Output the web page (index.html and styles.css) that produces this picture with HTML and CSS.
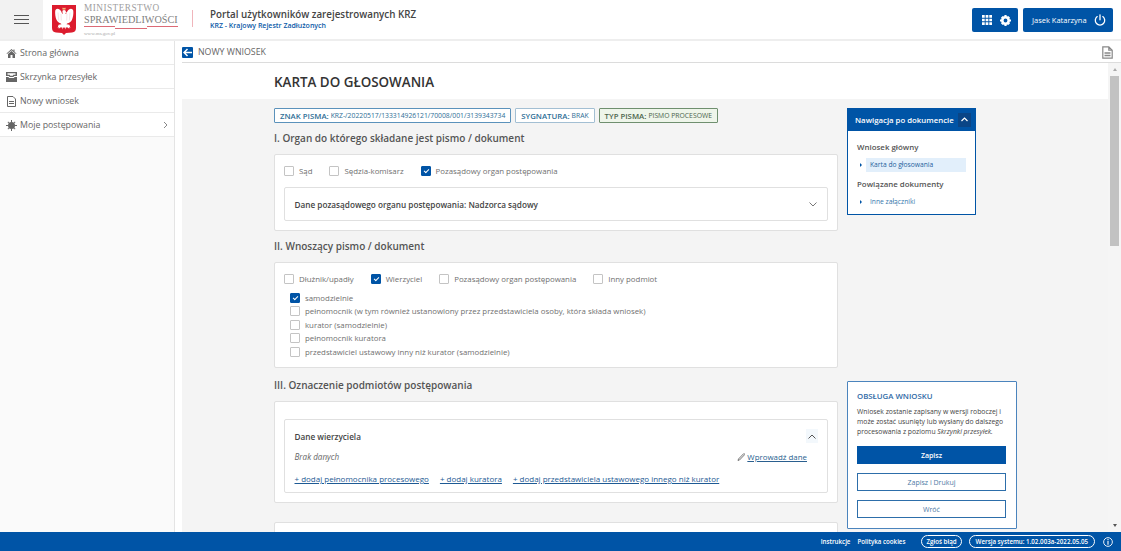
FILE: index.html
```html
<!DOCTYPE html>
<html lang="pl">
<head>
<meta charset="utf-8">
<title>Karta do głosowania</title>
<link rel="stylesheet" href="styles.css">
</head>
<body>
<header class="top">
  <button class="burger" aria-label="menu"><span></span><span></span><span></span></button>
  <div class="logo">
    <svg class="eagle" width="26" height="30" viewBox="0 0 26 30">
      <path d="M1 0H25V23Q25 27 21 27.500L15 28 13 30 11 28 5 27.500Q1 27 1 23Z" fill="#dc1c2e"/>
      <path d="M11.500 2.500 12.500 3.500 13 2.200 13.500 3.500 14.500 2.500 14.500 4.500H11.500Z" fill="#f3d98a"/>
      <path d="M13 5c1.200 0 2 .7 1.800 1.800l1.200.8-1.400.2L14.500 9c1-.2 1.300-1.600 2-3 .8-1.300 2-2.200 3.500-2.300 1 .1 2 .8 2.300 2 .3 3-.2 6.500-1.400 9.300-.9 1.900-2.600 3.100-4.800 3.400l-.6.8 2.900.5 1 3-1.500-.4.500 1.400-2.300-1.400-1.600.4.500 1.800-2-2.500-2 2.500.5-1.800-1.600-.4-2.300 1.400.5-1.400-1.500.4 1-3 2.900-.5-.6-.8C8.200 18.200 6.500 17 5.600 15.100 4.400 12.200 3.900 8.800 4.200 5.700c.3-1.200 1.300-1.900 2.300-2 1.500.1 2.700 1 3.500 2.300.7 1.400 1 2.800 1.700 3l-.3-3C11.300 5.800 12 5 13 5Z" fill="#fff"/>
      <path d="M7 7.500l.7 8M10 9l.3 6.500M19 7.500l-.7 8M16 9l-.3 6.500" stroke="#e8c9cc" stroke-width=".5"/>
    </svg>
    <div class="ministry">
      <div class="m1">MINISTERSTWO</div>
      <div class="m2">SPRAWIEDLIWOŚCI</div>
      <div class="mline"><i></i><i></i><i></i></div>
      <div class="m3">www.ms.gov.pl</div>
    </div>
  </div>
  <div class="sep"></div>
  <div class="portal">
    <div class="p1">Portal użytkowników zarejestrowanych KRZ</div>
    <div class="p2">KRZ - Krajowy Rejestr Zadłużonych</div>
  </div>
  <div class="top-actions">
    <div class="tbtn tools">
      <svg width="10" height="10" viewBox="0 0 11 11" fill="#fff"><path d="M0 0h3v3H0zM4 0h3v3H4zM8 0h3v3H8zM0 4h3v3H0zM4 4h3v3H4zM8 4h3v3H8zM0 8h3v3H0zM4 8h3v3H4zM8 8h3v3H8z"/></svg>
      <svg width="11" height="11" viewBox="0 0 12 12"><circle cx="6" cy="6" r="3.500" fill="none" stroke="#fff" stroke-width="2.800"/><path d="M4.800 0h2.400v2H4.800zM4.800 10h2.400v2H4.800zM0 4.800h2v2.400H0zM10 4.800h2v2.400h-2zM1 3 3 1l1.200 1.200L2.200 4.200zM9 1l2 2-1.200 1.200-2-2zM1 9l2 2 1.200-1.200-2-2zM11 9l-2 2-1.200-1.200 2-2z" fill="#fff"/></svg>
    </div>
    <div class="tbtn user">
      <span>Jasek Katarzyna</span>
      <svg width="12" height="12" viewBox="0 0 12 12" fill="none" stroke="#fff" stroke-width="1.300" stroke-linecap="round"><path d="M6 .8v5M3.200 2.600a4.700 4.700 0 1 0 5.600 0"/></svg>
    </div>
  </div>
</header>

<div class="middle">
  <nav class="side">
    <a class="side-item">
      <svg width="10" height="9" viewBox="0 0 10 9" fill="#666"><path d="M5 0 0 4.500l.5.500L5 1.200 9.500 5l.5-.5L8 2.700V.5H7v1.300ZM1.500 5v4h2.500V6h2v3h2.500V5L5 2Z"/></svg>
      Strona główna
    </a>
    <a class="side-item">
      <svg width="11" height="10" viewBox="0 0 11 10" fill="#666"><path d="M0 0h11v4H8L7.500 5h-4L3 4H0Zm1.500 1.200v1.600h2.200l.5 1h2.600l.5-1h2.200V1.200ZM0 5h2.500l.5 1h5l.5-1H11v5H0Z"/></svg>
      Skrzynka przesyłek
    </a>
    <a class="side-item">
      <svg width="9" height="11" viewBox="0 0 9 11" fill="none" stroke="#666"><path d="M.5.500h5.500l2.500 2.500v7.500h-8ZM2 5.500h5M2 7.500h5"/></svg>
      Nowy wniosek
    </a>
    <a class="side-item">
      <svg width="11" height="11" viewBox="0 0 11 11" fill="#666"><circle cx="5.500" cy="5.500" r="3.500"/><path d="M5 0h1v2H5zM5 9h1v2H5zM0 5h2v1H0zM9 5h2v1H9zM1.500 2.200l.7-.7L3.500 3l-.5.500zM8.800 1.500l.7.7L8 3.500 7.500 3zM1.500 8.800l.7.7L3.500 8 3 7.500zM9.500 8.800l-.7.7L7.500 8l.5-.5z"/></svg>
      Moje postępowania
      <svg class="side-chev" width="5" height="8" viewBox="0 0 5 8" fill="none" stroke="#888"><path d="M1 1l3 3-3 3"/></svg>
    </a>
  </nav>

  <main class="main">
    <div class="crumb">
      <span class="back"><svg width="9" height="9" viewBox="0 0 9 9" fill="none" stroke="#fff" stroke-width="1.500"><path d="M4.500 1 1 4.500 4.500 8M1 4.500h8"/></svg></span>
      <span class="crumb-text">NOWY WNIOSEK</span>
      <svg class="crumb-doc" width="11" height="13" viewBox="0 0 11 13" fill="none" stroke="#888" stroke-width="1.200"><path d="M.8.800h6l3.400 3.400v8H.8ZM6.800.800v3.400h3.400"/><path d="M2.500 7h6M2.500 9.500h6" stroke-width="1.500"/></svg>
    </div>
    <div class="scroller">
      <div class="doc">
        <h1 class="title">KARTA DO GŁOSOWANIA</h1>
        <div class="gray">
          <div class="col">
            <div class="tags">
              <span class="tag"><b>ZNAK PISMA:</b> KRZ-/20220517/133314926121/70008/001/3139343734</span>
              <span class="tag tag-light"><b>SYGNATURA:</b> BRAK</span>
              <span class="tag tag-green"><b>TYP PISMA:</b> PISMO PROCESOWE</span>
            </div>

            <h2 class="sec first">I. Organ do którego składane jest pismo / dokument</h2>
            <section class="card c1">
              <div class="checks">
                <label class="chk"><i class="box"></i>Sąd</label>
                <label class="chk"><i class="box"></i>Sędzia-komisarz</label>
                <label class="chk"><i class="box on"></i>Pozasądowy organ postępowania</label>
              </div>
              <div class="inner inner-row">
                <b>Dane pozasądowego organu postępowania: Nadzorca sądowy</b>
                <svg width="8" height="5" viewBox="0 0 8 5" fill="none" stroke="#777"><path d="M.5.500 4 4 7.500.500"/></svg>
              </div>
            </section>

            <h2 class="sec">II. Wnoszący pismo / dokument</h2>
            <section class="card c2">
              <div class="checks">
                <label class="chk"><i class="box"></i>Dłużnik/upadły</label>
                <label class="chk"><i class="box on"></i>Wierzyciel</label>
                <label class="chk"><i class="box"></i>Pozasądowy organ postępowania</label>
                <label class="chk"><i class="box"></i>Inny podmiot</label>
              </div>
              <div class="sub">
                <label class="chk"><i class="box on"></i>samodzielnie</label>
                <label class="chk"><i class="box"></i>pełnomocnik (w tym również ustanowiony przez przedstawiciela osoby, która składa wniosek)</label>
                <label class="chk"><i class="box"></i>kurator (samodzielnie)</label>
                <label class="chk"><i class="box"></i>pełnomocnik kuratora</label>
                <label class="chk"><i class="box"></i>przedstawiciel ustawowy inny niż kurator (samodzielnie)</label>
              </div>
            </section>

            <h2 class="sec">III. Oznaczenie podmiotów postępowania</h2>
            <section class="card c3">
              <div class="inner inner-col">
                <div class="in-head">
                  <b>Dane wierzyciela</b>
                  <span class="up"><svg width="8" height="5" viewBox="0 0 8 5" fill="none" stroke="#555"><path d="M.5 4.500 4 1l3.500 3.500"/></svg></span>
                </div>
                <div class="in-data">
                  <em>Brak danych</em>
                  <a class="enter"><svg width="8" height="8" viewBox="0 0 8 8" fill="none" stroke="#777"><path d="M6.500.800 1.500 6l-.5 1.500L2.500 7l5-5.200A.7.700 0 0 0 6.500.800Z"/></svg><u>Wprowadź dane</u></a>
                </div>
                <div class="in-links">
                  <a>+ dodaj pełnomocnika procesowego</a>
                  <a>+ dodaj kuratora</a>
                  <a>+ dodaj przedstawiciela ustawowego innego niż kurator</a>
                </div>
              </div>
            </section>
            <section class="card c4"></section>
          </div>

          <aside class="right">
            <div class="navdoc">
              <div class="navdoc-head">
                <span>Nawigacja po dokumencie</span>
                <span class="navdoc-up"><svg width="7" height="5" viewBox="0 0 7 5" fill="none" stroke="#fff" stroke-width="1.200"><path d="M.5 4 3.500 1l3 3"/></svg></span>
              </div>
              <div class="navdoc-body">
                <div class="nd-title">Wniosek główny</div>
                <div class="nd-item active"><i></i><span>Karta do głosowania</span></div>
                <div class="nd-title">Powiązane dokumenty</div>
                <div class="nd-item"><i></i><span>Inne załączniki</span></div>
              </div>
            </div>
            <div class="service">
              <div class="sv-title">OBSŁUGA WNIOSKU</div>
              <p class="sv-text">Wniosek zostanie zapisany w wersji roboczej i może zostać usunięty lub wysłany do dalszego procesowania z poziomu <em>Skrzynki przesyłek.</em></p>
              <button class="sv-btn primary">Zapisz</button>
              <button class="sv-btn">Zapisz i Drukuj</button>
              <button class="sv-btn">Wróć</button>
            </div>
          </aside>
        </div>
      </div>
      <div class="scrollbar">
        <span class="arr-up"></span>
        <span class="thumb"></span>
        <span class="arr-down"></span>
      </div>
    </div>
  </main>
</div>

<footer class="foot">
  <a>Instrukcje</a>
  <a class="cookies">Polityka cookies</a>
  <span class="pill pill-report">Zgłoś błąd</span>
  <span class="pill pill-version">Wersja systemu: 1.02.003a-2022.05.05</span>
  <svg width="10" height="10" viewBox="0 0 11 11" fill="none" stroke="#fff"><circle cx="5.500" cy="5.500" r="4.800"/><path d="M5.500 4.500v4M5.500 2.300v1.200" stroke-width="1.200"/></svg>
</footer>
</body>
</html>
```

FILE: styles.css
```css
* { box-sizing: border-box; }
html, body { height: 100%; }
body {
  margin: 0;
  height: 551px;
  display: flex;
  flex-direction: column;
  overflow: hidden;
  background: #fff;
  font-family: "Open Sans", sans-serif;
  color: #555;
  font-size: 8px;
}

/* header */
.top {
  height: 41px;
  flex: none;
  display: flex;
  align-items: center;
  background: #fff;
  border-bottom: 2px solid #eee;
}
.burger {
  width: 43px;
  height: 39px;
  border: 0;
  padding: 0;
  background: #f2f2f2;
  display: flex;
  flex-direction: column;
  gap: 3px;
  align-items: center;
  justify-content: center;
}
.burger span { width: 15px; height: 1px; background: #555; }
.logo { display: flex; align-items: flex-start; gap: 7px; margin-left: 8px; height: 39px; padding-top: 5px; }
.ministry { width: 94px; font-family: "Liberation Serif", serif; color: #a0a0a0; }
.m1 { font-size: 9.300px; line-height: 8px; letter-spacing: .45px; margin-top: -1px; white-space: nowrap; }
.m2 { font-size: 10.200px; line-height: 12px; color: #808080; margin-top: 2px; white-space: nowrap; }
.mline { display: flex; height: 3px; }
.mline i { display: block; height: 1px; background: #dc6a76; flex: 1; }
.mline i:nth-child(2) { margin-top: 2px; }
.m3 { font-size: 5px; line-height: 6px; margin-top: 2px; color: #aaa; }
.sep { width: 1px; height: 17px; background: #f0b5bb; margin-left: 14px; margin-bottom: 2px; }
.portal { margin-left: 17px; }
.p1 { font-size: 9.800px; line-height: 12px; font-weight: 600; color: #444; white-space: nowrap; }
.p2 { font-size: 7px; line-height: 9px; font-weight: 600; color: #0b5aa8; white-space: nowrap; }
.top-actions { margin-left: auto; margin-right: 8px; margin-top: 1px; display: flex; gap: 5px; }
.tbtn {
  height: 24px;
  background: #0054a6;
  border-radius: 2px;
  color: #fff;
  display: flex;
  align-items: center;
}
.tools { width: 46px; gap: 8px; padding-left: 10px; }
.user { width: 90px; padding-left: 9px; gap: 7px; font-size: 7.500px; white-space: nowrap; }

/* middle */
.middle { flex: 1; min-height: 0; display: flex; }
.side {
  width: 175px;
  flex: none;
  background: #fafafa;
  border-right: 1px solid #e4e4e4;
}
.side-item {
  height: 24px;
  display: flex;
  align-items: center;
  gap: 3px;
  padding: 1px 0 0 6px;
  background: #fff;
  border-bottom: 1px solid #eaeaea;
  font-size: 8.800px;
  color: #666;
  white-space: nowrap;
}
.side-item svg:first-child { width: 11px; flex: none; }
.side-chev { margin-left: auto; margin-right: 6px; }

.main { flex: 1; min-width: 0; display: flex; flex-direction: column; padding-left: 7px; }
.crumb {
  height: 22px;
  flex: none;
  display: flex;
  align-items: center;
  border-bottom: 1px solid #dcdcdc;
  padding: 1px 8px 0 0;
}
.back {
  width: 11px;
  height: 11px;
  background: #0054a6;
  border-radius: 1px;
  display: flex;
  align-items: center;
  justify-content: center;
}
.crumb-text { margin-left: 5px; font-size: 8.800px; color: #666; }
.crumb-doc { margin-left: auto; }
.scroller { flex: 1; min-height: 0; display: flex; }
.doc { flex: 1; min-width: 0; display: flex; flex-direction: column; overflow: hidden; }
.title {
  margin: 0;
  height: 36px;
  flex: none;
  padding: 2px 0 0 92px;
  display: flex;
  align-items: center;
  font-size: 13.400px;
  font-weight: 600;
  color: #333;
}
.gray {
  flex: 1;
  min-height: 0;
  background: #f4f4f4;
  padding: 9px 0 3px 92px;
  display: flex;
  gap: 9px;
  overflow: hidden;
}
.col { width: 564px; flex: none; }
.tags { display: flex; gap: 4px; white-space: nowrap; }
.tag {
  height: 15px;
  display: flex;
  align-items: center;
  gap: 2px;
  padding: 0 5px;
  background: #fff;
  border: 1px solid #5b92bb;
  border-radius: 1px;
  color: #2d6e96;
  font-size: 6.800px;
}
.tag b { font-size: 7.800px; font-weight: 600; }
.tag-light { border-color: #a3bfd3; }
.tag-green { background: #eef5ea; border-color: #6f8f6f; color: #4c644c; }
.sec { margin: 0; font-size: 10px; line-height: 14px; font-weight: 600; color: #555; }
.sec.first { margin-top: 8px; }
.card {
  background: #fff;
  border: 1px solid #e0e0e0;
  border-radius: 2px;
}
.c1 { height: 77px; margin: 9px 0 8px; padding: 9px 9px 0; }
.c2 { height: 106px; margin: 9px 0 10px; padding: 9px 9px 0; }
.c3 { height: 102px; margin: 9px 0 19px; padding: 17px 9px 0; }
.c4 { height: 30px; }
.checks { display: flex; gap: 17px; }
.chk { display: flex; align-items: center; gap: 5px; height: 14px; font-size: 7.850px; color: #707070; white-space: nowrap; }
.box {
  width: 10px;
  height: 10px;
  flex: none;
  background: #fff;
  border: 1px solid #c4c4c4;
  border-radius: 1px;
  position: relative;
}
.box.on { background: #0054a6; border-color: #0054a6; }
.box.on::after {
  content: "";
  position: absolute;
  left: 2px;
  top: 2px;
  width: 4px;
  height: 2px;
  border-left: 1px solid #fff;
  border-bottom: 1px solid #fff;
  transform: rotate(-45deg);
}
.inner { border: 1px solid #e0e0e0; border-radius: 2px; background: #fff; }
.inner-row {
  height: 34px;
  margin-top: 9px;
  display: flex;
  align-items: center;
  justify-content: space-between;
  padding: 0 10px 0 9.500px;
}
.inner b { font-weight: 600; color: #444; font-size: 8.200px; }
.sub { display: flex; flex-direction: column; margin: 5px 0 0 6px; }
.sub .chk { height: 13.500px; }
.inner-col { height: 74px; padding: 9px 10px 0 9.500px; }
.in-head { display: flex; justify-content: space-between; align-items: center; height: 14px; }
.up { width: 12px; height: 14px; margin-right: -1px; background: #f3f8fc; display: flex; align-items: center; justify-content: center; }
.in-data { display: flex; justify-content: space-between; align-items: center; margin-top: 8px; font-size: 8.100px; height: 11px; padding-right: 10px; }
.in-data em { color: #666; }
.enter { display: flex; align-items: center; gap: 2px; color: #2a5f8f; font-size: 7.900px; }
.in-links { display: flex; gap: 11px; margin-top: 11px; font-size: 8px; color: #1e5a94; text-decoration: underline; white-space: nowrap; }

/* right */
.right {
  width: 170px;
  flex: none;
  display: flex;
  flex-direction: column;
  justify-content: space-between;
}
.navdoc { width: 129px; height: 107px; background: #fff; border: 1px solid #0054a6; border-top: 0; border-radius: 1px; }
.navdoc-head {
  height: 23px;
  background: #0054a6;
  color: #fff;
  font-size: 7.800px;
  font-weight: 600;
  display: flex;
  align-items: center;
  justify-content: space-between;
  padding: 0 5px 0 8px;
  margin: 0 -1px;
  white-space: nowrap;
}
.navdoc-up { width: 13px; height: 14px; background: #0a4586; display: flex; align-items: center; justify-content: center; }
.navdoc-body { padding: 9px 9px 0; }
.nd-title { font-size: 7.900px; line-height: 14px; font-weight: 600; color: #555; }
.nd-item { display: flex; align-items: center; height: 14px; font-size: 6.700px; color: #3578ad; margin: 4px 0 5px; }
.nd-item i { width: 0; height: 0; border-left: 2px solid #0054a6; border-top: 2px solid transparent; border-bottom: 2px solid transparent; margin: 0 4px 0 3px; }
.nd-item span { flex: 1; padding-left: 4px; line-height: 14px; }
.nd-item.active span { background: #e2effb; color: #1f5f9c; }
.service {
  flex: none;
  height: 148px;
  background: #fff;
  border: 1px solid #4b84bd;
  border-radius: 1px;
  padding: 9px 9px 0;
}
.sv-title { font-size: 7.800px; line-height: 11px; color: #2f6aa6; font-weight: 600; white-space: nowrap; }
.sv-text { margin: 5px 0 9px; font-size: 6.800px; line-height: 10px; color: #444; }
.sv-btn {
  display: block;
  width: 149px;
  height: 18px;
  padding: 0;
  margin-bottom: 9px;
  border: 1px solid #2d6eaa;
  background: #fff;
  color: #4e7aa5;
  font: 7px "Open Sans", sans-serif;
}
.sv-btn.primary { background: #0054a6; border-color: #0054a6; color: #fff; font-weight: 600; }

/* scrollbar */
.scrollbar { width: 13px; flex: none; display: flex; flex-direction: column; align-items: center; background: #f5f5f5; }
.thumb { width: 9px; height: 170px; background: #c2c2c2; margin-top: 5px; }
.arr-up { width: 0; height: 0; margin-top: 5px; border: 2px solid transparent; border-top: 0; border-bottom: 3px solid #aaa; }
.arr-down { width: 0; height: 0; margin-top: auto; margin-bottom: 5px; border: 2px solid transparent; border-bottom: 0; border-top: 3px solid #555; }

/* footer */
.foot {
  height: 19px;
  flex: none;
  background: #0054a6;
  color: #fff;
  display: flex;
  align-items: center;
  justify-content: flex-end;
  padding-right: 8px;
  font-size: 6.200px;
  font-weight: 600;
}
.cookies { margin: 0 16px 0 7px; }
.pill { border: 1px solid #fff; border-radius: 7px; height: 13px; display: flex; align-items: center; white-space: nowrap; }
.pill-report { padding: 0 4px; margin-right: 7px; }
.pill-version { padding: 0 6px; margin-right: 8px; }
```
